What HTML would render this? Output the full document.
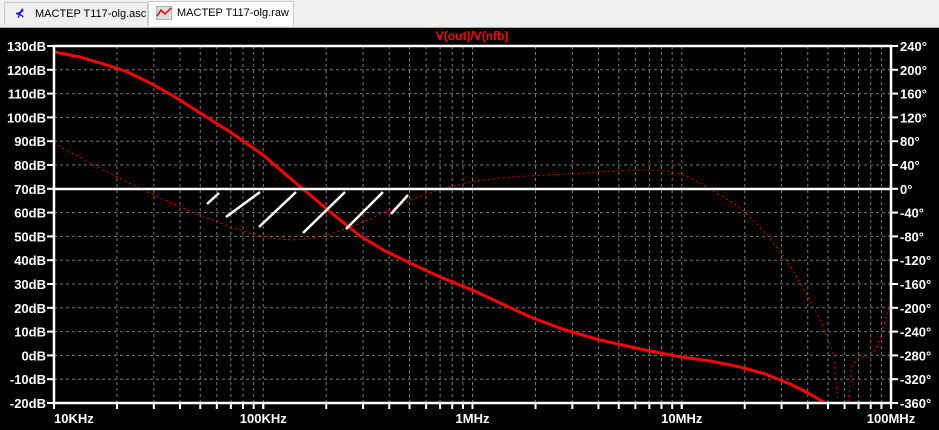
<!DOCTYPE html><html><head><style>body{margin:0;width:939px;height:430px;overflow:hidden;background:#000;font-family:"Liberation Sans",sans-serif}
.tabs{position:absolute;left:0;top:0;width:939px;height:27px;background:#f0f0f0;border-bottom:1px solid #aaa}
.t{position:absolute;top:2px;height:22px;font-size:11px;line-height:22px;white-space:nowrap}
</style></head><body>
<div class="tabs">
<div class="t" style="left:4px;width:142px;border:1px solid #ccc;border-bottom:none;background:#f0f0f0"><span style="position:absolute;left:10px;color:#00f;font-weight:bold">⊀</span><span style="position:absolute;left:30px">MACTEP T117-olg.asc</span></div>
<div class="t" style="left:148px;top:1px;width:144px;height:24px;background:#fff;border:1px solid #ccc;border-bottom:none"><svg style="position:absolute;left:7px;top:4px" width="16" height="14"><rect x="0" y="0" width="16" height="14" fill="#ddd" stroke="#888"/><polyline points="1,10 5,4 9,8 15,2" fill="none" stroke="#e00" stroke-width="1.5"/></svg><span style="position:absolute;left:28px">MACTEP T117-olg.raw</span></div>
</div>
<svg style="position:absolute;left:0;top:0" width="939" height="430" font-family="Liberation Sans,sans-serif" font-weight="bold" font-size="13">
<g id="g" stroke="#777" stroke-dasharray="3,3" stroke-width="1" fill="none"></g>
<text x="472" y="40" fill="#f00" font-size="12" text-anchor="middle">V(out)/V(nfb)</text>
<path fill="none" stroke="#d00" stroke-width="1" stroke-dasharray="2,3" d="M54,143 C110,175 180,210 240,230 S330,238 400,205 S520,178 600,172 S680,172 720,195 S790,260 820,320 L833,352 L838,402 M848,402 L852,365 L860,357 L870,357 L878,345 L891,300"/>
<polyline fill="none" stroke="#f00" stroke-width="3" stroke-linejoin="round" points="54,52 80,57 100,63 125,71 150,83 175,97 200,113 230,132 263,155 285,174 310,195 335,216 360,236 385,251 410,263 440,277 472,290 500,303 530,317 565,330 600,340 640,349 681,357 710,361 740,367 765,374 790,384 808,393 825,403"/>
<g stroke="#fff" stroke-width="2.5"><line x1="207" y1="204" x2="219" y2="193"/><line x1="226" y1="217" x2="260" y2="192"/><line x1="259" y1="227" x2="296" y2="192"/><line x1="303" y1="233" x2="345" y2="192"/><line x1="346" y1="229" x2="383" y2="192"/><line x1="391" y1="214" x2="408" y2="195"/></g>
<line x1="54" y1="189" x2="891" y2="189" stroke="#fff" stroke-width="2.5"/>
<rect x="54" y="46" width="837" height="357" fill="none" stroke="#fff" stroke-width="2.5"/>
<g id="l" fill="#fff"></g>
</svg>
<script>
var g=document.getElementById('g'),l=document.getElementById('l'),ns='http://www.w3.org/2000/svg';
function ln(p,a,b,c,d,s){var e=document.createElementNS(ns,'line');e.setAttribute('x1',a);e.setAttribute('y1',b);e.setAttribute('x2',c);e.setAttribute('y2',d);if(s)e.setAttribute('stroke',s),e.setAttribute('stroke-width',2);p.appendChild(e);}
function tx(s,x,y,a){var e=document.createElementNS(ns,'text');e.setAttribute('x',x);e.setAttribute('y',y);e.setAttribute('text-anchor',a);e.textContent=s;l.appendChild(e);}
for(var i=0;i<=15;i++){var y=46+i*357/15;if(i>0&&i<15)ln(g,54,y,891,y);ln(l,47,y,54,y,'#fff');ln(l,891,y,898,y,'#fff');tx((130-i*10)+'dB',46,y+5,'end');tx((240-i*40)+'°',900,y+5,'start');}
var D=209.25,labs=['10KHz','100KHz','1MHz','10MHz','100MHz'];
for(var d=0;d<4;d++)for(var k=1;k<10;k++){var x=54+d*D+Math.log10(k)*D;if(k>1||d>0)ln(g,x,46,x,403);ln(l,x,403,x,409,'#fff');}
for(var d=0;d<5;d++){var x=54+d*D;ln(l,x,403,x,409,'#fff');tx(labs[d],x,423,d==0?'start':'middle');}
</script>
</body></html>
